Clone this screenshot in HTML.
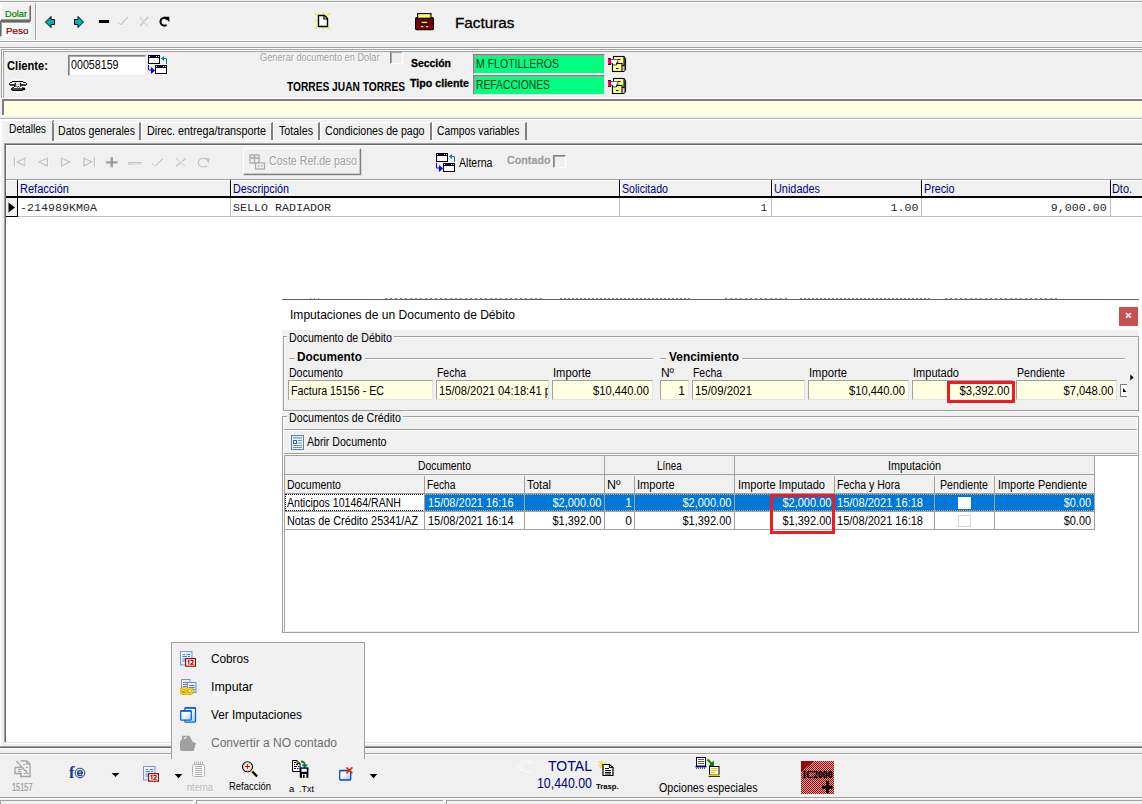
<!DOCTYPE html>
<html>
<head>
<meta charset="utf-8">
<title>Facturas</title>
<style>
html,body{margin:0;padding:0;}
body{width:1142px;height:804px;overflow:hidden;background:#f0f0f0;font-family:"Liberation Sans",sans-serif;font-size:12px;color:#000;position:relative;}
.a{position:absolute;}
.t{position:absolute;white-space:nowrap;line-height:1;}
.hl{position:absolute;height:1px;}
.vl{position:absolute;width:1px;}
.sunk{position:absolute;box-sizing:border-box;border:1px solid;border-color:#808080 #fff #fff #808080;}
.yf{position:absolute;box-sizing:border-box;background:#ffffe1;border:1px solid;border-color:#a0a0a0 #e3e3e3 #e3e3e3 #a0a0a0;}
.yf span{position:absolute;top:4px;font-size:12px;line-height:1;white-space:nowrap;}
.gh{position:absolute;color:#000080;font-size:12px;line-height:1;white-space:nowrap;top:183px;}
.mono{position:absolute;font-family:"Liberation Mono",monospace;font-size:11px;line-height:1;white-space:nowrap;top:203px;color:#2a2a2a;}
.dl{position:absolute;font-size:12px;line-height:1;white-space:nowrap;color:#000;}
.cell{position:absolute;font-size:12px;line-height:1;white-space:nowrap;}
</style>
</head>
<body>

<!-- ===== TOP TOOLBAR ===== -->
<div class="hl" style="left:0;top:1px;width:1142px;background:#a0a0a0;"></div>
<div class="hl" style="left:0;top:2px;width:1142px;background:#fff;"></div>
<div class="vl" style="left:35px;top:3px;height:37px;background:#a0a0a0;"></div>
<div class="vl" style="left:36px;top:3px;height:37px;background:#fff;"></div>
<div class="hl" style="left:0;top:40px;width:1142px;background:#fff;"></div>
<div class="hl" style="left:0;top:41px;width:1142px;background:#a0a0a0;"></div>
<div class="hl" style="left:0;top:42px;width:1142px;background:#fff;"></div>
<div class="hl" style="left:0;top:47px;width:1142px;background:#a0a0a0;"></div>
<div class="hl" style="left:0;top:48px;width:1142px;background:#fff;"></div>

<!-- Dolar / Peso buttons -->
<div class="a" style="left:0;top:5px;width:31px;height:16px;box-sizing:border-box;border:1px solid;border-color:#fff #696969 #696969 #fff;box-shadow:inset -1px -1px 0 #a0a0a0;"></div>
<div class="t" style="left:5px;top:9px;font-size:9.5px;color:#008000;-webkit-text-stroke:0.2px #008000;transform:scaleX(0.9690);transform-origin:0 0;">Dolar</div>
<div class="a" style="left:0;top:21px;width:31px;height:16px;box-sizing:border-box;border:1px solid;border-color:#696969 #fff #fff #696969;box-shadow:inset 1px 1px 0 #a0a0a0;background:#f8f8f8;"></div>
<div class="t" style="left:5.7px;top:26.3px;font-size:9.5px;color:#800000;-webkit-text-stroke:0.2px #800000;transform:scaleX(1.0390);transform-origin:0 0;">Peso</div>

<!-- nav icons top -->
<svg class="a" style="left:44px;top:14px;" width="130" height="16" viewBox="0 0 130 16">
  <path d="M1.5 8 L7 2.5 V5.5 H10.5 V10.5 H7 V13.5 Z" fill="#00b4b4" stroke="#000" stroke-width="1"/>
  <path d="M39.5 8 L34 2.5 V5.5 H30.5 V10.5 H34 V13.5 Z" fill="#00b4b4" stroke="#000" stroke-width="1"/>
  <rect x="55" y="6" width="10" height="3" fill="#000"/>
  <path d="M74 9 L77 11 L84 3" fill="none" stroke="#c4c4c4" stroke-width="1.3"/>
  <path d="M74.5 10 L77.5 12 L84.5 4" fill="none" stroke="#fff" stroke-width="1"/>
  <path d="M96 3 L104 12 M104 3 L96 12" fill="none" stroke="#c4c4c4" stroke-width="1.3"/>
  <path d="M97 3.5 L105 12.5" fill="none" stroke="#fff" stroke-width="0.8"/>
  <path d="M123.6 5.6 A3.9 3.9 0 1 0 122.6 10.9" fill="none" stroke="#000" stroke-width="2"/>
  <path d="M120.2 2.7 H125.3 V8 Z" fill="#000"/>
</svg>

<!-- new doc icon -->
<svg class="a" style="left:313px;top:11px;" width="20" height="20" viewBox="0 0 20 20">
  <path d="M2 2 L6 6 M17 2 L13 6 M2 18 L6 14 M17 18 L13 14 M1 10 H5 M10 1 V4 M10 19 V16" stroke="#f4f000" stroke-width="1.2"/>
  <path d="M5.5 4.5 H11.5 L14.5 7.5 V15.5 H5.5 Z" fill="#fff" stroke="#000" stroke-width="1.4"/>
  <path d="M11 4.5 V8 H14.5" fill="none" stroke="#000" stroke-width="1.2"/>
</svg>

<!-- Facturas icon -->
<svg class="a" style="left:415px;top:12px;" width="19" height="19" viewBox="0 0 19 19">
  <rect x="0.6" y="5.6" width="17.8" height="12" rx="1.2" fill="#800000" stroke="#000" stroke-width="1.2"/>
  <rect x="2.6" y="1.6" width="13.4" height="5" fill="#ffff00" stroke="#000" stroke-width="1.1"/>
  <path d="M3.5 2.8 H15 " stroke="#d0d0d0" stroke-width="1"/><path d="M4 4.6 L14 3.6" stroke="#fff" stroke-width="0.8"/>
  <path d="M1.5 6.3 H17.5" stroke="#000" stroke-width="1.2"/>
  <rect x="5.6" y="8.6" width="7.6" height="3.6" fill="#800000" stroke="#000" stroke-width="0.9"/>
  <path d="M6.6 10.4 H12.2" stroke="#ffff00" stroke-width="1.2"/>
  <path d="M6 14.6 H8.2 M11 14.6 H13.2" stroke="#ffff00" stroke-width="1.2"/>
</svg>
<div class="t" style="left:455px;top:16px;font-size:14px;-webkit-text-stroke:0.3px #000;transform:scaleX(1.0924);transform-origin:0 0;">Facturas</div>

<!-- Client panel content -->
<div class="t" style="left:7px;top:60px;font-size:12px;font-weight:bold;transform:scaleX(0.9315);transform-origin:0 0;">Cliente:</div>
<div class="a" style="left:68px;top:55px;width:78px;height:21px;box-sizing:border-box;background:#fff;border:1px solid;border-color:#808080 #e8e8e8 #e8e8e8 #808080;box-shadow:inset 1px 1px 0 #a8a8a8;"></div>
<div class="t" style="left:71px;top:59px;font-size:12px;transform:scaleX(0.8897);transform-origin:0 0;">00058159</div>

<svg class="a" id="swap1" style="left:148px;top:55px;" width="20" height="20" viewBox="0 0 20 20">
  <rect x="0" y="0" width="12" height="9" fill="#000"/><rect x="1" y="3" width="10" height="5" fill="#fff"/>
  <rect x="1" y="1" width="1" height="1" fill="#fff"/><rect x="8" y="1" width="1" height="1" fill="#fff"/><rect x="10" y="1" width="1" height="1" fill="#fff"/><rect x="3" y="1" width="4" height="1" fill="#0000a0"/>
  <rect x="7" y="10" width="12" height="9" fill="#000"/><rect x="8" y="13" width="10" height="5" fill="#fff"/>
  <rect x="8" y="11" width="1" height="1" fill="#fff"/><rect x="15" y="11" width="1" height="1" fill="#fff"/><rect x="17" y="11" width="1" height="1" fill="#fff"/><rect x="10" y="11" width="4" height="1" fill="#0000a0"/>
  <path d="M13 3.5 L16 1 V3 H18 Q19 3 19 4 V9 H18 V4 H16 V6 Z" fill="#008080"/>
  <path d="M0 10 H1 V14.5 H3 V12 L7 15.5 L3 19 V15.5 H1 Q0 15.5 0 14.5 Z" fill="#0000ff"/>
</svg>

<!-- phone -->
<svg class="a" style="left:8px;top:79px;" width="21" height="14" viewBox="-1 -1 21 14">
  <path d="M3 0.5 H14.5 L17.5 2 L18.5 4 L17 6 H12 L14.5 7.5 L16.5 8 V10.5 L14 11.5 H3 L1.5 10 V8 L5.5 7 V6 H1.5 L0 4 L1 2 Z" fill="#fff" stroke="#fff" stroke-width="2" stroke-linejoin="round"/>
  <path d="M3 1.5 H14.2" stroke="#000" stroke-width="1.1"/>
  <path d="M1.2 2.5 H3 M14.2 2.5 H16.8" stroke="#000" stroke-width="1"/>
  <path d="M0.6 3.2 V5 M17.6 3.2 V5" stroke="#000" stroke-width="1.2"/>
  <path d="M1 5 H6.3 M11.2 5 H17.2" stroke="#000" stroke-width="1.7"/>
  <path d="M6.3 2.8 V5.4 M11.4 2.8 V5.4" stroke="#000" stroke-width="1.1"/>
  <path d="M7 4.3 H11" stroke="#909090" stroke-width="0.6"/>
  <path d="M5.6 5.6 V7 M11.2 6.4 H12.2" stroke="#000" stroke-width="1.1"/>
  <rect x="6.4" y="6" width="1.3" height="1" fill="#000"/><rect x="8.6" y="6" width="1.3" height="1" fill="#000"/>
  <path d="M3.5 7 H4.8 V8 H8 L8.4 7 L9 8 H9.8 L10.4 7 L10.9 8 H12.8 L13.2 7 L14 7.6 L16.2 8 V10 L14 10.2 V11 H3.2 V10.2 L2 10 V8.4 L3 8 Z" fill="#000"/>
  <path d="M3.4 9 H13.6" stroke="#a0a0a0" stroke-width="0.9"/>
  <rect x="14.2" y="7.2" width="1.6" height="0.8" fill="#707070"/>
</svg>

<div class="t" style="left:260px;top:52px;font-size:10.5px;color:#a0a0a0;text-shadow:1px 1px 0 #fff;transform:scaleX(0.8787);transform-origin:0 0;">Generar documento en Dolar</div>
<div class="a" style="left:390px;top:51px;width:13px;height:13px;box-sizing:border-box;background:#f0f0f0;border:1px solid;border-color:#808080 #fff #fff #808080;box-shadow:inset 1px 1px 0 #a8a8a8;"></div>

<div class="t" style="left:287px;top:81px;font-size:12px;font-weight:bold;transform:scaleX(0.8494);transform-origin:0 0;">TORRES JUAN TORRES</div>
<div class="t" style="left:411px;top:58px;font-size:11px;font-weight:bold;-webkit-text-stroke:0.3px #000;transform:scaleX(0.9481);transform-origin:0 0;">Sección</div>
<div class="t" style="left:410px;top:78px;font-size:11px;font-weight:bold;-webkit-text-stroke:0.3px #000;transform:scaleX(0.9685);transform-origin:0 0;">Tipo cliente</div>

<div class="a" style="left:473px;top:54px;width:132px;height:20px;box-sizing:border-box;background:#00ff80;border:1px solid;border-color:#808080 #e8e8e8 #e8e8e8 #808080;box-shadow:inset 1px 1px 0 #a0a0a0;"></div>
<div class="t" style="left:476px;top:58px;font-size:12px;color:#003018;transform:scaleX(0.8766);transform-origin:0 0;">M FLOTILLEROS</div>
<div class="a" style="left:473px;top:75px;width:132px;height:20px;box-sizing:border-box;background:#00ff80;border:1px solid;border-color:#808080 #e8e8e8 #e8e8e8 #808080;box-shadow:inset 1px 1px 0 #a0a0a0;"></div>
<div class="t" style="left:476px;top:79px;font-size:12px;color:#003018;transform:scaleX(0.8603);transform-origin:0 0;">REFACCIONES</div>

<svg class="a" style="left:608px;top:55px;" width="19" height="18" viewBox="0 0 19 18">
  <path d="M16 1.5 L17.6 3.5 V15 L16 16.5 H13 V1.5 Z" fill="#fff" stroke="#000" stroke-width="1"/>
  <path d="M16.2 3 V15.5" stroke="#000" stroke-width="0.8"/>
  <rect x="5.5" y="1.5" width="10.5" height="9" fill="#ffff88" stroke="#000" stroke-width="1.1"/>
  <rect x="4.5" y="8.5" width="9.5" height="8" fill="#ffff88" stroke="#000" stroke-width="1.1"/>
  <path d="M10 4.5 H12.5 M8 13.5 H10.5" stroke="#000" stroke-width="1.1"/>
  <path d="M3 4.5 H9.5 L10 7.5 H8.5 L8.5 10 H5.5 L4.5 8.5 L3 8 Z" fill="#fff" stroke="#000" stroke-width="0.7"/>
  <rect x="3" y="4.8" width="6" height="2.6" fill="#fff"/>
  <rect x="0" y="3.2" width="3" height="6.6" fill="#ff00d0"/><rect x="1" y="4" width="2" height="5" fill="#f00020"/>
  <path d="M0 3.7 H3 M0 9.5 H3" stroke="#000" stroke-width="1"/>
</svg>
<svg class="a" style="left:608px;top:77px;" width="19" height="18" viewBox="0 0 19 18">
  <path d="M16 1.5 L17.6 3.5 V15 L16 16.5 H13 V1.5 Z" fill="#fff" stroke="#000" stroke-width="1"/>
  <path d="M16.2 3 V15.5" stroke="#000" stroke-width="0.8"/>
  <rect x="5.5" y="1.5" width="10.5" height="9" fill="#ffff88" stroke="#000" stroke-width="1.1"/>
  <rect x="4.5" y="8.5" width="9.5" height="8" fill="#ffff88" stroke="#000" stroke-width="1.1"/>
  <path d="M10 4.5 H12.5 M8 13.5 H10.5" stroke="#000" stroke-width="1.1"/>
  <path d="M3 4.5 H9.5 L10 7.5 H8.5 L8.5 10 H5.5 L4.5 8.5 L3 8 Z" fill="#fff" stroke="#000" stroke-width="0.7"/>
  <rect x="3" y="4.8" width="6" height="2.6" fill="#fff"/>
  <rect x="0" y="3.2" width="3" height="6.6" fill="#ff00d0"/><rect x="1" y="4" width="2" height="5" fill="#f00020"/>
  <path d="M0 3.7 H3 M0 9.5 H3" stroke="#000" stroke-width="1"/>
</svg>

<!-- ===== CLIENT PANEL ===== -->
<div class="a" style="left:1px;top:49px;width:1141px;height:49px;box-sizing:border-box;border-left:1px solid #a0a0a0;border-top:1px solid #a0a0a0;"></div>
<div class="a" style="left:2px;top:50px;width:1140px;height:48px;box-sizing:border-box;border-left:1px solid #fff;border-top:1px solid #fff;"></div>
<div class="a" style="left:3px;top:51px;width:1139px;height:47px;box-sizing:border-box;border-left:1px solid #a0a0a0;border-top:1px solid #a0a0a0;"></div>

<!-- yellow bar -->
<div class="hl" style="left:1px;top:98px;width:1141px;background:#fff;"></div>
<div class="a" style="left:2px;top:99px;width:1140px;height:16px;box-sizing:border-box;background:#ffffe1;border-top:2px solid #808080;border-left:2px solid #808080;"></div>
<div class="hl" style="left:2px;top:115px;width:1140px;background:#fff;"></div>
<div class="hl" style="left:0;top:118px;width:1142px;background:#b4b4b4;"></div>
<div class="hl" style="left:0;top:119px;width:1142px;background:#fff;"></div>

<!-- ===== TAB PANEL ===== -->
<!-- tabs -->
<div class="a" style="left:1px;top:120px;width:53px;height:21px;box-sizing:border-box;border-top:1px solid #fff;border-left:1px solid #fff;border-right:2px solid #808080;background:#f0f0f0;"></div>
<div class="t" style="left:9px;top:123px;font-size:12px;transform:scaleX(0.8533);transform-origin:0 0;">Detalles</div>
<div class="a" style="left:53px;top:122px;width:88px;height:18px;box-sizing:border-box;border-top:1px solid #fff;border-right:2px solid #808080;"></div>
<div class="t" style="left:58px;top:125px;font-size:12px;transform:scaleX(0.8811);transform-origin:0 0;">Datos generales</div>
<div class="a" style="left:141px;top:122px;width:132px;height:18px;box-sizing:border-box;border-top:1px solid #fff;border-left:1px solid #fff;border-right:2px solid #808080;"></div>
<div class="t" style="left:147px;top:125px;font-size:12px;transform:scaleX(0.8965);transform-origin:0 0;">Direc. entrega/transporte</div>
<div class="a" style="left:273px;top:122px;width:47px;height:18px;box-sizing:border-box;border-top:1px solid #fff;border-left:1px solid #fff;border-right:2px solid #808080;"></div>
<div class="t" style="left:279px;top:125px;font-size:12px;transform:scaleX(0.8940);transform-origin:0 0;">Totales</div>
<div class="a" style="left:320px;top:122px;width:112px;height:18px;box-sizing:border-box;border-top:1px solid #fff;border-left:1px solid #fff;border-right:2px solid #808080;"></div>
<div class="t" style="left:325px;top:125px;font-size:12px;transform:scaleX(0.8824);transform-origin:0 0;">Condiciones de pago</div>
<div class="a" style="left:432px;top:122px;width:95px;height:18px;box-sizing:border-box;border-top:1px solid #fff;border-left:1px solid #fff;border-right:2px solid #808080;"></div>
<div class="t" style="left:437px;top:125px;font-size:12px;transform:scaleX(0.8590);transform-origin:0 0;">Campos variables</div>

<div class="hl" style="left:54px;top:140px;width:1088px;background:#fff;"></div>
<div class="hl" style="left:4px;top:143px;width:1138px;background:#a0a0a0;"></div>
<div class="hl" style="left:5px;top:144px;width:1137px;background:#696969;"></div>
<div class="hl" style="left:6px;top:145px;width:1136px;background:#fff;"></div>
<div class="vl" style="left:4px;top:143px;height:599px;background:#a0a0a0;"></div>
<div class="vl" style="left:5px;top:144px;height:598px;background:#696969;"></div>
<div class="vl" style="left:6px;top:145px;height:597px;background:#fff;"></div>
<div class="vl" style="left:0px;top:120px;height:626px;background:#fff;"></div>

<!-- grid area white -->
<div class="a" style="left:6px;top:198px;width:1136px;height:544px;background:#fff;"></div>


<!-- inner nav icons (disabled) -->
<svg class="a" style="left:12px;top:155px;" width="202" height="15" viewBox="0 0 202 15">
<g transform="translate(0,0.9) scale(1,0.88)">
  <g fill="none" stroke="#c0c0c0" stroke-width="1.2">
    <path d="M2.5 2 V12"/><path d="M13 2.5 L5 7 L13 11.5 Z"/>
    <path d="M35.5 2.5 L27 7 L35.5 11.5 Z"/>
    <path d="M49.5 2.5 L58 7 L49.5 11.5 Z"/>
    <path d="M72 2.5 L80 7 L72 11.5 Z"/><path d="M82.5 2 V12"/>
    <path d="M117 7.5 H129 V9.5 H117 Z"/>
    <path d="M140 9 L143.5 11.5 L151 3.5"/>
    <path d="M164 2.5 L174 12 M174 2.5 L164 12"/>
    <path d="M196 6 A5 5 0 1 0 195 11"/><path d="M192 3 L197 3.5 L196 8"/>
  </g>
  <path d="M94 6 H98.5 V1.5 H101 V6 H105.5 V8.5 H101 V13 H98.5 V8.5 H94 Z" fill="#9c9c9c"/>
  <g fill="none" stroke="#fff" stroke-width="0.8">
    <path d="M3.5 3 V13"/><path d="M14 3.5 V12.5"/><path d="M36.5 3.5 V12.5"/><path d="M50.5 12.5 L59 8"/><path d="M73 12.5 L81 8"/><path d="M83.5 3 V13"/>
    <path d="M118 10.5 H130 V8.5"/><path d="M141 10 L144.5 12.5 L152 4.5"/><path d="M165 3 L175 12.5"/>
  </g>
</g>
</svg>

<!-- Coste button -->
<div class="a" style="left:243px;top:148px;width:118px;height:27px;box-sizing:border-box;border:1px solid;border-color:#fff #808080 #808080 #fff;box-shadow:inset -1px -1px 0 #c8c8c8, 1px 1px 0 #d8d8d8;"></div>
<svg class="a" style="left:249px;top:154px;" width="17" height="16" viewBox="0 0 17 16">
  <g fill="none" stroke="#a8a8a8" stroke-width="1.3"><rect x="1" y="1" width="9" height="8"/><path d="M1 4 H10 M5.5 1 V9"/><rect x="6.5" y="9" width="9" height="6" fill="#f0f0f0"/><path d="M9 12 H10.5 M12 12 H13.5"/></g>
</svg>
<div class="t" style="left:269px;top:155px;font-size:12px;color:#a0a0a0;text-shadow:1px 1px 0 #fff;transform:scaleX(0.8853);transform-origin:0 0;">Coste Ref.de paso</div>

<!-- Alterna -->
<svg class="a" style="left:436px;top:153px;" width="20" height="20" viewBox="0 0 20 20">
  <rect x="0" y="0" width="12" height="9" fill="#000"/><rect x="1" y="3" width="10" height="5" fill="#fff"/>
  <rect x="1" y="1" width="1" height="1" fill="#fff"/><rect x="8" y="1" width="1" height="1" fill="#fff"/><rect x="10" y="1" width="1" height="1" fill="#fff"/><rect x="3" y="1" width="4" height="1" fill="#0000a0"/>
  <rect x="7" y="10" width="12" height="9" fill="#000"/><rect x="8" y="13" width="10" height="5" fill="#fff"/>
  <rect x="8" y="11" width="1" height="1" fill="#fff"/><rect x="15" y="11" width="1" height="1" fill="#fff"/><rect x="17" y="11" width="1" height="1" fill="#fff"/><rect x="10" y="11" width="4" height="1" fill="#0000a0"/>
  <path d="M13 3.5 L16 1 V3 H18 Q19 3 19 4 V9 H18 V4 H16 V6 Z" fill="#008080"/>
  <path d="M0 10 H1 V14.5 H3 V12 L7 15.5 L3 19 V15.5 H1 Q0 15.5 0 14.5 Z" fill="#0000ff"/>
</svg>
<div class="t" style="left:459px;top:157px;font-size:12px;transform:scaleX(0.8809);transform-origin:0 0;">Alterna</div>
<div class="t" style="left:507px;top:155px;font-size:11px;font-weight:bold;color:#a0a0a0;text-shadow:1px 1px 0 #fff;-webkit-text-stroke:0.3px #a0a0a0;transform:scaleX(0.9751);transform-origin:0 0;">Contado</div>
<div class="a" style="left:553px;top:155px;width:13px;height:13px;box-sizing:border-box;background:#f0f0f0;border:1px solid;border-color:#808080 #fff #fff #808080;box-shadow:inset 1px 1px 0 #a8a8a8;"></div>

<!-- grid header -->
<div class="hl" style="left:6px;top:179px;width:1136px;background:#a0a0a0;"></div>
<div class="hl" style="left:6px;top:180px;width:1136px;background:#fff;"></div>
<div class="a" style="left:6px;top:196px;width:1136px;height:2px;background:#000;"></div>
<div class="vl" style="left:17px;top:180px;height:36px;background:#000;"></div>
<div class="vl" style="left:230px;top:180px;height:17px;background:#000;"></div>
<div class="vl" style="left:619px;top:180px;height:17px;background:#000;"></div>
<div class="vl" style="left:771px;top:180px;height:17px;background:#000;"></div>
<div class="vl" style="left:921px;top:180px;height:17px;background:#000;"></div>
<div class="vl" style="left:1110px;top:180px;height:17px;background:#000;"></div>
<div class="vl" style="left:231px;top:180px;height:16px;background:#fff;"></div>
<div class="vl" style="left:620px;top:180px;height:16px;background:#fff;"></div>
<div class="vl" style="left:772px;top:180px;height:16px;background:#fff;"></div>
<div class="vl" style="left:922px;top:180px;height:16px;background:#fff;"></div>
<div class="vl" style="left:1111px;top:180px;height:16px;background:#fff;"></div>
<div class="vl" style="left:18px;top:180px;height:16px;background:#fff;"></div>
<div class="gh" style="left:20px;transform:scaleX(0.9180);transform-origin:0 0;">Refacción</div>
<div class="gh" style="left:233px;transform:scaleX(0.8931);transform-origin:0 0;">Descripción</div>
<div class="gh" style="left:622px;transform:scaleX(0.8841);transform-origin:0 0;">Solicitado</div>
<div class="gh" style="left:774px;transform:scaleX(0.9072);transform-origin:0 0;">Unidades</div>
<div class="gh" style="left:924px;transform:scaleX(0.8966);transform-origin:0 0;">Precio</div>
<div class="gh" style="left:1112px;transform:scaleX(0.9084);transform-origin:0 0;">Dto.</div>

<!-- grid row -->
<div class="a" style="left:6px;top:198px;width:11px;height:18px;background:#f0f0f0;"></div>
<div class="hl" style="left:6px;top:216px;width:12px;background:#000;"></div>
<div class="hl" style="left:18px;top:216px;width:1124px;background:#c0c0c0;"></div>
<div class="vl" style="left:230px;top:198px;height:18px;background:#c0c0c0;"></div>
<div class="vl" style="left:619px;top:198px;height:18px;background:#c0c0c0;"></div>
<div class="vl" style="left:771px;top:198px;height:18px;background:#c0c0c0;"></div>
<div class="vl" style="left:921px;top:198px;height:18px;background:#c0c0c0;"></div>
<div class="vl" style="left:1110px;top:198px;height:18px;background:#c0c0c0;"></div>
<svg class="a" style="left:8px;top:202px;" width="8" height="11" viewBox="0 0 8 11"><path d="M0.5 0.5 L7 5.5 L0.5 10.5 Z" fill="#000"/></svg>
<div class="mono" style="left:20px;transform:scaleX(1.0602);transform-origin:0 0;">-214989KM0A</div>
<div class="mono" style="left:233px;transform:scaleX(1.0604);transform-origin:0 0;">SELLO RADIADOR</div>
<div class="mono" style="right:375px;">1</div>
<div class="mono" style="right:224px;transform:scaleX(1.0604);transform-origin:100% 0;">1.00</div>
<div class="mono" style="right:35px;transform:scaleX(1.0604);transform-origin:100% 0;">9,000.00</div>


<!-- ===== DIALOG ===== -->
<div class="a" style="left:310px;top:298px;width:12px;height:1px;background:repeating-linear-gradient(90deg,#9a9a9a 0 1px,transparent 1px 4px);"></div>
<div class="a" style="left:385px;top:298px;width:160px;height:1px;background:repeating-linear-gradient(90deg,#8a8a8a 0 2px,transparent 2px 5px);"></div>
<div class="a" style="left:560px;top:298px;width:130px;height:1px;background:repeating-linear-gradient(90deg,#8a8a8a 0 2px,transparent 2px 4px);"></div>
<div class="a" style="left:725px;top:298px;width:65px;height:1px;background:repeating-linear-gradient(90deg,#8a8a8a 0 2px,transparent 2px 5px);"></div>
<div class="a" style="left:800px;top:298px;width:130px;height:1px;background:repeating-linear-gradient(90deg,#8a8a8a 0 2px,transparent 2px 4px);"></div>
<div class="a" style="left:945px;top:298px;width:115px;height:1px;background:repeating-linear-gradient(90deg,#8a8a8a 0 2px,transparent 2px 5px);"></div>

<div class="a" style="left:282px;top:299px;width:857px;height:1px;background:#606060;"></div>
<div class="a" style="left:282px;top:300px;width:857px;height:30px;background:#fff;"></div>
<div class="a" style="left:282px;top:330px;width:857px;height:302px;background:#f0f0f0;"></div>
<div class="t" style="left:290px;top:308px;font-size:13px;color:#000;transform:scaleX(0.9266);transform-origin:0 0;">Imputaciones de un Documento de Débito</div>
<div class="a" style="left:1119px;top:307px;width:19px;height:19px;background:#c75050;"></div>
<svg class="a" style="left:1124px;top:311px;" width="9" height="9" viewBox="0 0 9 9"><path d="M2 2 L6.8 6.6 M6.8 2 L2 6.6" stroke="#fff" stroke-width="1.7" fill="none"/></svg>

<!-- group 1 -->
<div class="a" style="left:283px;top:336px;width:856px;height:75px;box-sizing:border-box;border:1px solid #a0a0a0;box-shadow:inset 1px 1px 0 #fff, 1px 1px 0 #fff;"></div>
<div class="a" style="left:287px;top:331px;width:107px;height:12px;background:#f0f0f0;"></div>
<div class="dl" style="left:289px;top:332px;transform:scaleX(0.8873);transform-origin:0 0;">Documento de Débito</div>

<div class="hl" style="left:289px;top:358px;width:6px;background:#a0a0a0;"></div>
<div class="hl" style="left:289px;top:359px;width:6px;background:#fff;"></div>
<div class="t" style="left:297px;top:351px;font-size:12px;font-weight:bold;transform:scaleX(0.9848);transform-origin:0 0;">Documento</div>
<div class="hl" style="left:365px;top:358px;width:288px;background:#a0a0a0;"></div>
<div class="hl" style="left:365px;top:359px;width:288px;background:#fff;"></div>
<div class="hl" style="left:660px;top:358px;width:6px;background:#a0a0a0;"></div>
<div class="hl" style="left:660px;top:359px;width:6px;background:#fff;"></div>
<div class="t" style="left:669px;top:351px;font-size:12px;font-weight:bold;transform:scaleX(0.9903);transform-origin:0 0;">Vencimiento</div>
<div class="hl" style="left:742px;top:358px;width:383px;background:#a0a0a0;"></div>
<div class="hl" style="left:742px;top:359px;width:383px;background:#fff;"></div>

<div class="dl" style="left:289px;top:367px;transform:scaleX(0.8798);transform-origin:0 0;">Documento</div>
<div class="dl" style="left:437px;top:367px;transform:scaleX(0.8693);transform-origin:0 0;">Fecha</div>
<div class="dl" style="left:553px;top:367px;transform:scaleX(0.9339);transform-origin:0 0;">Importe</div>
<div class="dl" style="left:661px;top:367px;transform:scaleX(0.9952);transform-origin:0 0;">Nº</div>
<div class="dl" style="left:693px;top:367px;transform:scaleX(0.8693);transform-origin:0 0;">Fecha</div>
<div class="dl" style="left:809px;top:367px;transform:scaleX(0.9339);transform-origin:0 0;">Importe</div>
<div class="dl" style="left:913px;top:367px;transform:scaleX(0.9191);transform-origin:0 0;">Imputado</div>
<div class="dl" style="left:1017px;top:367px;transform:scaleX(0.8881);transform-origin:0 0;">Pendiente</div>

<div class="yf" style="left:288px;top:380px;width:145px;height:20px;"><span style="left:2px;transform:scaleX(0.8881);transform-origin:0 0;">Factura 15156 - EC</span></div>
<div class="yf" style="left:436px;top:380px;width:113px;height:20px;overflow:hidden;"><span style="left:2px;transform:scaleX(0.9324);transform-origin:0 0;">15/08/2021 04:18:41 p</span></div>
<div class="yf" style="left:552px;top:380px;width:101px;height:20px;"><span style="right:3px;transform:scaleX(0.9324);transform-origin:100% 0;">$10,440.00</span></div>
<div class="yf" style="left:660px;top:380px;width:29px;height:20px;"><span style="right:3px;">1</span></div>
<div class="yf" style="left:692px;top:380px;width:113px;height:20px;"><span style="left:2px;transform:scaleX(0.9490);transform-origin:0 0;">15/09/2021</span></div>
<div class="yf" style="left:808px;top:380px;width:101px;height:20px;"><span style="right:3px;transform:scaleX(0.9324);transform-origin:100% 0;">$10,440.00</span></div>
<div class="yf" style="left:912px;top:380px;width:101px;height:20px;"><span style="right:3px;transform:scaleX(0.9365);transform-origin:100% 0;">$3,392.00</span></div>
<div class="yf" style="left:1016px;top:380px;width:101px;height:20px;"><span style="right:3px;transform:scaleX(0.9365);transform-origin:100% 0;">$7,048.00</span></div>
<div class="a" style="left:947px;top:381px;width:68px;height:22px;box-sizing:border-box;border:3px solid #ed1c24;"></div>
<svg class="a" style="left:1130px;top:374px;" width="5" height="7" viewBox="0 0 5 7"><path d="M0.3 0.5 L3.6 3.5 L0.3 6.5 Z" fill="#000"/></svg>
<div class="a" style="left:1120px;top:384px;width:7px;height:13px;box-sizing:border-box;background:#fff;border:1px solid #808080;border-right:none;"></div>
<svg class="a" style="left:1123px;top:388px;" width="4" height="5" viewBox="0 0 4 5"><path d="M0 0 L3.5 4 H0 Z" fill="#000"/></svg>


<!-- group 2 -->
<div class="a" style="left:282px;top:416px;width:857px;height:217px;box-sizing:border-box;border:1px solid #a0a0a0;background:#f0f0f0;"></div>
<div class="hl" style="left:283px;top:417px;width:855px;background:#fff;"></div>
<div class="vl" style="left:283px;top:417px;height:215px;background:#fff;"></div>
<div class="vl" style="left:1137px;top:417px;height:215px;background:#fff;"></div>
<div class="a" style="left:287px;top:411px;width:116px;height:12px;background:#f0f0f0;"></div>
<div class="dl" style="left:289px;top:412px;transform:scaleX(0.8883);transform-origin:0 0;">Documentos de Crédito</div>
<div class="hl" style="left:284px;top:429px;width:853px;background:#a0a0a0;"></div>
<div class="hl" style="left:284px;top:430px;width:853px;background:#fff;"></div>
<div class="hl" style="left:284px;top:453px;width:853px;background:#a0a0a0;"></div>
<div class="hl" style="left:284px;top:454px;width:853px;background:#fff;"></div>
<svg class="a" style="left:291px;top:435px;" width="13" height="15" viewBox="0 0 13 15">
  <rect x="0.5" y="0.5" width="12" height="14" fill="#eaf2fb" stroke="#5b7fae"/>
  <rect x="2" y="2" width="9" height="1.5" fill="#7ea6d8"/>
  <rect x="2" y="5" width="4" height="4" fill="#2a5db0"/><rect x="3" y="6" width="2" height="2" fill="#fff"/>
  <path d="M7 5.5 H11 M7 8 H11 M2 10.5 H11 M2 12.5 H11" stroke="#6a8fc4" stroke-width="1"/>
</svg>
<div class="dl" style="left:306.5px;top:436px;transform:scaleX(0.8829);transform-origin:0 0;">Abrir Documento</div>

<!-- credit grid -->
<div class="a" style="left:284px;top:455px;width:854px;height:176px;box-sizing:border-box;background:#fff;border:1px solid #a0a0a0;border-bottom:none;border-right:none;"></div>
<div class="a" style="left:285px;top:456px;width:810px;height:37px;background:#f0f0f0;"></div>
<div class="hl" style="left:285px;top:474px;width:810px;background:#a0a0a0;"></div>
<div class="hl" style="left:285px;top:493px;width:810px;background:#a0a0a0;"></div>
<div class="hl" style="left:285px;top:511px;width:810px;background:#a0a0a0;"></div>
<div class="hl" style="left:285px;top:529px;width:810px;background:#a0a0a0;"></div>
<!-- selected row -->
<div class="a" style="left:425px;top:494px;width:669px;height:17px;background:#0078d7;"></div>
<div class="a" style="left:285px;top:494px;width:140px;height:17px;box-sizing:border-box;border:1px dotted #000;"></div>
<div class="a" style="left:425px;top:494px;width:669px;height:17px;box-sizing:border-box;border-top:1px dotted #e0a060;border-bottom:1px dotted #e0a060;"></div>
<!-- group dividers (header band 1) -->
<div class="vl" style="left:604px;top:456px;height:73px;background:#a0a0a0;"></div>
<div class="vl" style="left:734px;top:456px;height:73px;background:#a0a0a0;"></div>
<div class="vl" style="left:1094px;top:456px;height:74px;background:#a0a0a0;"></div>
<!-- col dividers -->
<div class="vl" style="left:424px;top:476px;height:53px;background:#a0a0a0;"></div>
<div class="vl" style="left:524px;top:476px;height:53px;background:#a0a0a0;"></div>
<div class="vl" style="left:634px;top:476px;height:53px;background:#a0a0a0;"></div>
<div class="vl" style="left:834px;top:476px;height:53px;background:#a0a0a0;"></div>
<div class="vl" style="left:934px;top:476px;height:53px;background:#a0a0a0;"></div>
<div class="vl" style="left:994px;top:476px;height:53px;background:#a0a0a0;"></div>

<div class="cell" style="left:418px;top:460px;transform:scaleX(0.8635);transform-origin:0 0;">Documento</div>
<div class="cell" style="left:656.5px;top:460px;transform:scaleX(0.8191);transform-origin:0 0;">Línea</div>
<div class="cell" style="left:887.7px;top:460px;transform:scaleX(0.9028);transform-origin:0 0;">Imputación</div>
<div class="cell" style="left:287px;top:479px;transform:scaleX(0.8798);transform-origin:0 0;">Documento</div>
<div class="cell" style="left:427.3px;top:479px;transform:scaleX(0.8543);transform-origin:0 0;">Fecha</div>
<div class="cell" style="left:527.3px;top:479px;transform:scaleX(0.9464);transform-origin:0 0;">Total</div>
<div class="cell" style="left:607px;top:479px;transform:scaleX(1.0335);transform-origin:0 0;">Nº</div>
<div class="cell" style="left:637px;top:479px;transform:scaleX(0.9241);transform-origin:0 0;">Importe</div>
<div class="cell" style="left:737.5px;top:479px;transform:scaleX(0.9249);transform-origin:0 0;">Importe Imputado</div>
<div class="cell" style="left:837.4px;top:479px;transform:scaleX(0.8746);transform-origin:0 0;">Fecha y Hora</div>
<div class="cell" style="left:940px;top:479px;transform:scaleX(0.8881);transform-origin:0 0;">Pendiente</div>
<div class="cell" style="left:997.5px;top:479px;transform:scaleX(0.9076);transform-origin:0 0;">Importe Pendiente</div>

<div class="cell" style="left:286.5px;top:497px;transform:scaleX(0.8809);transform-origin:0 0;">Anticipos 101464/RANH</div>
<div class="cell" style="left:428px;top:497px;color:#fff;transform:scaleX(0.9152);transform-origin:0 0;">15/08/2021 16:16</div>
<div class="cell" style="right:540.5px;top:497px;color:#fff;transform:scaleX(0.9178);transform-origin:100% 0;">$2,000.00</div>
<div class="cell" style="right:510px;top:497px;color:#fff;">1</div>
<div class="cell" style="right:411px;top:497px;color:#fff;transform:scaleX(0.9178);transform-origin:100% 0;">$2,000.00</div>
<div class="cell" style="right:311px;top:497px;color:#fff;transform:scaleX(0.9178);transform-origin:100% 0;">$2,000.00</div>
<div class="cell" style="left:837.4px;top:497px;color:#fff;transform:scaleX(0.9206);transform-origin:0 0;">15/08/2021 16:18</div>
<div class="a" style="left:958px;top:497px;width:13px;height:12px;background:#fff;"></div>
<div class="cell" style="right:50.7px;top:497px;color:#fff;transform:scaleX(0.9091);transform-origin:100% 0;">$0.00</div>

<div class="cell" style="left:286.5px;top:515px;transform:scaleX(0.9008);transform-origin:0 0;">Notas de Crédito 25341/AZ</div>
<div class="cell" style="left:428px;top:515px;transform:scaleX(0.9152);transform-origin:0 0;">15/08/2021 16:14</div>
<div class="cell" style="right:540.5px;top:515px;transform:scaleX(0.9178);transform-origin:100% 0;">$1,392.00</div>
<div class="cell" style="right:510px;top:515px;">0</div>
<div class="cell" style="right:411px;top:515px;transform:scaleX(0.9178);transform-origin:100% 0;">$1,392.00</div>
<div class="cell" style="right:311px;top:515px;transform:scaleX(0.9178);transform-origin:100% 0;">$1,392.00</div>
<div class="cell" style="left:837.4px;top:515px;transform:scaleX(0.9206);transform-origin:0 0;">15/08/2021 16:18</div>
<div class="a" style="left:958px;top:515px;width:13px;height:12px;box-sizing:border-box;background:#fff;border:1px solid #d8d8d8;"></div>
<div class="cell" style="right:50.7px;top:515px;transform:scaleX(0.9091);transform-origin:100% 0;">$0.00</div>
<div class="a" style="left:770px;top:494px;width:65px;height:40px;box-sizing:border-box;border:3px solid #ed1c24;"></div>

<!-- ===== BOTTOM ===== -->
<div class="hl" style="left:4px;top:742px;width:1138px;background:#e3e3e3;"></div>
<div class="hl" style="left:4px;top:743px;width:1138px;background:#fff;"></div>
<div class="hl" style="left:0;top:746px;width:1142px;background:#a0a0a0;"></div>
<div class="hl" style="left:0;top:747px;width:1142px;background:#696969;"></div>
<div class="hl" style="left:0;top:748px;width:1142px;background:#fff;"></div>
<div class="hl" style="left:0;top:753px;width:1142px;background:#a0a0a0;"></div>
<div class="hl" style="left:0;top:754px;width:1142px;background:#fff;"></div>
<div class="hl" style="left:0;top:797px;width:1142px;background:#a0a0a0;"></div>
<div class="hl" style="left:0;top:798px;width:1142px;background:#fff;"></div>
<div class="hl" style="left:0;top:800px;width:1142px;background:#a0a0a0;"></div>


<!-- ===== POPUP MENU ===== -->
<div class="a" style="left:171px;top:642px;width:194px;height:117px;box-sizing:border-box;background:#f2f2f2;border:1px solid #a0a0a0;border-bottom:none;"></div>
<div class="a" style="left:172px;top:643px;width:35px;height:116px;background:#f0f0f0;"></div>
<div class="t" style="left:211px;top:652px;font-size:13px;color:#000;transform:scaleX(0.9064);transform-origin:0 0;">Cobros</div>
<div class="t" style="left:211px;top:680px;font-size:13px;color:#000;transform:scaleX(0.9529);transform-origin:0 0;">Imputar</div>
<div class="t" style="left:211px;top:708px;font-size:13px;color:#000;transform:scaleX(0.9059);transform-origin:0 0;">Ver Imputaciones</div>
<div class="t" style="left:211px;top:736px;font-size:13px;color:#6d6d6d;transform:scaleX(0.9225);transform-origin:0 0;">Convertir a NO contado</div>

<!-- menu icons -->
<svg class="a" id="mi1" style="left:180px;top:650px;" width="17" height="18" viewBox="0 0 17 18">
  <defs><linearGradient id="gdoc" x1="0" y1="0" x2="1" y2="1"><stop offset="0" stop-color="#fff"/><stop offset="1" stop-color="#c4daf6"/></linearGradient></defs>
  <rect x="0.5" y="1.5" width="11.5" height="13.5" fill="url(#gdoc)" stroke="#8294c8" stroke-width="1"/>
  <path d="M2.5 4.5 H5 M6.5 4.5 H10 M2.5 6.5 H7 M8 6.5 H10 M2.5 9 H5 M2.5 11 H5" stroke="#2a8ae0" stroke-width="1.1"/>
  <rect x="5.6" y="8.6" width="9.8" height="7.6" fill="#fff" stroke="#a80808" stroke-width="1.2"/>
  <path d="M7.6 11 L8.9 10.4 V14.6" fill="none" stroke="#a80808" stroke-width="1.2"/>
  <path d="M10.6 11.2 Q10.8 10.3 12 10.3 Q13.4 10.4 13.2 11.5 Q13 12.3 10.7 14.3 H13.8" fill="none" stroke="#a80808" stroke-width="1.1"/>
</svg>
<svg class="a" id="mi2" style="left:180px;top:678px;" width="17" height="18" viewBox="0 0 17 18">
  <rect x="1.5" y="1.5" width="8.5" height="12" fill="url(#gdoc)" stroke="#7c90cc" stroke-width="1"/>
  <path d="M3 4.5 H8 M3 6.5 H8 M3 8.5 H8" stroke="#7070c0" stroke-width="1"/>
  <rect x="7.5" y="4.5" width="8.5" height="10" fill="url(#gdoc)" stroke="#7c90cc" stroke-width="1"/>
  <path d="M9 7.5 H14.5 M9 9.5 H14.5 M11 11.5 H14.5" stroke="#7070c0" stroke-width="1"/>
  <rect x="0.8" y="10.8" width="6.2" height="4.6" rx="2.2" fill="none" stroke="#b88a00" stroke-width="2.6"/>
  <rect x="6.2" y="10.8" width="6.2" height="4.6" rx="2.2" fill="none" stroke="#b88a00" stroke-width="2.6"/>
  <rect x="0.8" y="10.8" width="6.2" height="4.6" rx="2.2" fill="none" stroke="#ffe000" stroke-width="1.4"/>
  <rect x="6.2" y="10.8" width="6.2" height="4.6" rx="2.2" fill="none" stroke="#ffe000" stroke-width="1.4"/>
  <path d="M4.5 13.1 H8.7" stroke="#b88a00" stroke-width="2.4"/><path d="M4.2 13.1 H9" stroke="#ffe000" stroke-width="1.2"/>
</svg>
<svg class="a" id="mi3" style="left:180px;top:706px;" width="17" height="18" viewBox="0 0 17 18">
  <defs><linearGradient id="gw" x1="0" y1="0" x2="1" y2="1"><stop offset="0" stop-color="#fff"/><stop offset="0.5" stop-color="#eef5fe"/><stop offset="1" stop-color="#9cc6f6"/></linearGradient></defs>
  <rect x="4.9" y="1.6" width="10.6" height="14.6" rx="1" fill="url(#gw)" stroke="#0a62d4" stroke-width="1.3"/>
  <rect x="4.9" y="1.2" width="10.6" height="1.6" fill="#0a62d4"/>
  <rect x="0.7" y="4.6" width="10.6" height="9.6" rx="1" fill="url(#gw)" stroke="#0a62d4" stroke-width="1.3"/>
  <rect x="0.7" y="4.2" width="10.6" height="1.6" fill="#0a62d4"/>
</svg>
<svg class="a" id="mi4" style="left:180px;top:735px;" width="17" height="17" viewBox="0 0 17 17">
  <path d="M2.1 0.8 H9.5 L12.5 6.4 L16 8.3 L14.4 13.5 L13.6 16 H1 L0 14.2 V6.8 L2.1 3.8 Z" fill="#a0a0a0"/>
  <path d="M4.2 3.6 L6.4 2.2" stroke="#f2f2f2" stroke-width="1.4"/>
</svg>

<!-- ===== BOTTOM TOOLBAR ===== -->
<svg class="a" id="bi1" style="left:14px;top:760px;" width="17" height="18" viewBox="0 0 17 18">
  <g fill="none" stroke="#a4a4a4" stroke-width="1.3">
    <path d="M6.5 1 H13 L16 4 V16.5 H6.5 V13.5"/><path d="M12.8 1.2 V4.2 H16"/>
    <path d="M2.5 1 L14 14"/>
    <path d="M1 7.5 H7.5 M1 7.5 V13.5 H8"/>
    <path d="M4 9.5 H8 M4 11.5 H7 M9 4.5 H11 M12 7.5 H14 M10 13.5 H12 M13 13.5 H14.5 M11 10.5 H13" stroke-width="1.1"/>
  </g>
</svg>
<div class="t" style="left:12px;top:783px;font-size:10px;color:#9a9a9a;-webkit-text-stroke:0.2px #9a9a9a;transform:scaleX(0.7371);transform-origin:0 0;">15157</div>

<div class="t" style="left:69px;top:765px;font-family:'Liberation Serif',serif;font-weight:bold;font-size:16.5px;color:#1c3a8c;">f</div>
<svg class="a" id="bi2" style="left:74px;top:767px;" width="12" height="12" viewBox="0 0 12 12">
  <circle cx="6" cy="6" r="4.8" fill="none" stroke="#24409a" stroke-width="1"/>
  <path d="M3.6 6.2 H8.3 Q8.3 3.6 6 3.6 Q3.6 3.6 3.6 6.2 Q3.6 8.6 6.2 8.6 Q7.6 8.6 8.3 7.7" fill="none" stroke="#24409a" stroke-width="1.4"/>
</svg>
<svg class="a" style="left:111px;top:772px;" width="9" height="6" viewBox="0 0 9 6"><path d="M0.7 0.9 H8.3 L4.5 5.1 Z" fill="#000"/></svg>

<svg class="a" id="bi3" style="left:143px;top:765px;" width="17" height="18" viewBox="0 0 17 18">
  
  <rect x="0.5" y="1.5" width="11.5" height="13.5" fill="url(#gdoc)" stroke="#8294c8" stroke-width="1"/>
  <path d="M2.5 4.5 H5 M6.5 4.5 H10 M2.5 6.5 H7 M8 6.5 H10 M2.5 9 H5 M2.5 11 H5" stroke="#2a8ae0" stroke-width="1.1"/>
  <rect x="5.6" y="8.6" width="9.8" height="7.6" fill="#fff" stroke="#a80808" stroke-width="1.2"/>
  <path d="M7.6 11 L8.9 10.4 V14.6" fill="none" stroke="#a80808" stroke-width="1.2"/>
  <path d="M10.6 11.2 Q10.8 10.3 12 10.3 Q13.4 10.4 13.2 11.5 Q13 12.3 10.7 14.3 H13.8" fill="none" stroke="#a80808" stroke-width="1.1"/>
</svg>
<svg class="a" style="left:174px;top:773px;" width="9" height="6" viewBox="0 0 9 6"><path d="M0.7 1 H8.3 L4.5 5.2 Z" fill="#000"/></svg>

<svg class="a" id="bi4" style="left:192px;top:761px;" width="13" height="16" viewBox="0 0 13 16">
  <path d="M2.5 3.5 Q0.5 3.5 0.5 5.5 V13.5 Q0.5 15.5 2.5 15.5 H10.5 Q12.5 15.5 12.5 13.5 V5.5 Q12.5 3.5 10.5 3.5 Z" fill="#fafafa" stroke="#b4b4b4" stroke-width="1"/>
  <path d="M2.5 0.5 V4 M4.5 0.5 V4 M6.5 0.5 V4 M8.5 0.5 V4 M10.5 0.5 V4" stroke="#b4b4b4" stroke-width="1"/>
  <path d="M3 5.5 H10 M3 7.5 H10 M3 9.5 H10 M3 11.5 H10 M3 13.5 H10" stroke="#b0b0b0" stroke-width="1"/>
</svg>
<div class="t" style="left:187px;top:781.5px;font-size:10.5px;color:#b4b4b4;text-shadow:1px 1px 0 #fff;transform:scaleX(0.8730);transform-origin:0 0;">nterna</div>

<svg class="a" id="bi5" style="left:242px;top:761px;" width="17" height="17" viewBox="0 0 17 17">
  <circle cx="5.5" cy="5.8" r="5" fill="#fff" stroke="#000" stroke-width="1.1"/>
  <circle cx="5.5" cy="5.8" r="3.9" fill="none" stroke="#c0c0c0" stroke-width="0.9"/>
  <path d="M3 5.5 H8 M5.5 3 V8" stroke="#ff0000" stroke-width="1.2"/>
  <path d="M9.1 9.4 L10.5 10.8" stroke="#e8d000" stroke-width="1.6"/>
  <path d="M10.3 10.6 L15.1 15.4" stroke="#000" stroke-width="2.2"/>
</svg>
<div class="t" style="left:229px;top:782px;font-size:10px;color:#000;transform:scaleX(0.9445);transform-origin:0 0;">Refacción</div>

<svg class="a" id="bi6" style="left:292px;top:760px;" width="17" height="18" viewBox="0 0 17 18">
  <path d="M0.5 0.5 H5 L8 3.5 V11.5 H0.5 Z" fill="#fff" stroke="#000"/>
  <path d="M5 0.5 V3.5 H8" fill="none" stroke="#000" stroke-width="0.9"/>
  <path d="M2 2.5 H4 M2 4.5 H3 M4 4.5 H6 M2 6.5 H5 M6 6.5 H7 M2 8.5 H4 M5 8.5 H6.5" stroke="#000" stroke-width="1"/>
  <path d="M9 1.5 Q12.8 1.5 12.6 5" fill="none" stroke="#008000" stroke-width="1.8"/><path d="M9.6 4.6 H16 L12.8 8.2 Z" fill="#008000"/>
  <rect x="7.8" y="7.8" width="8.6" height="10" fill="#000"/>
  <rect x="7.8" y="7.4" width="8.6" height="1" fill="#0000e0"/>
  <rect x="9.4" y="8.8" width="5.4" height="3" fill="#fff"/>
  <rect x="10" y="14" width="4.4" height="3.8" fill="#fff"/><rect x="11" y="14.6" width="1.6" height="3.2" fill="#000"/>
</svg>
<div class="t" style="left:289px;top:784px;font-size:9.5px;color:#000;">a</div>
<div class="t" style="left:299px;top:784px;font-size:9.5px;color:#000;transform:scaleX(0.9467);transform-origin:0 0;">.Txt</div>

<svg class="a" id="bi7" style="left:339px;top:766px;" width="15" height="15" viewBox="0 0 15 15">
  <defs><linearGradient id="gwx" x1="0" y1="0" x2="1" y2="1"><stop offset="0" stop-color="#fff"/><stop offset="0.45" stop-color="#f4f9ff"/><stop offset="1" stop-color="#8cc0fa"/></linearGradient></defs>
  <rect x="0.7" y="4.4" width="11" height="9.6" rx="1" fill="url(#gwx)" stroke="#0848c8" stroke-width="1.3"/>
  <rect x="0.7" y="4" width="11" height="1.4" fill="#0848c8"/>
  <path d="M7.4 1.3 L13.4 7.3 M13.4 1.3 L7.4 7.3" stroke="#e83000" stroke-width="1.7"/>
</svg>
<svg class="a" style="left:369px;top:773px;" width="9" height="6" viewBox="0 0 9 6"><path d="M0.7 1 H8.3 L4.5 5.2 Z" fill="#000"/></svg>

<!-- TOTAL -->
<svg class="a" id="bi8" style="left:516px;top:759px;" width="20" height="16" viewBox="0 0 20 16">
  <g fill="none" stroke="#fff" stroke-width="1.1" stroke-dasharray="2 1.2"><path d="M5 2 H14 M3 5 H10 M1 8 H8 M4 11 H10 M12 4 Q16 2 18 5 M9 13 H16"/></g>
</svg>
<div class="t" style="left:548px;top:758.5px;font-size:14.5px;color:#000080;transform:scaleX(0.9694);transform-origin:0 0;">TOTAL</div>
<div class="t" style="left:537px;top:776px;font-size:14px;color:#000080;transform:scaleX(0.8829);transform-origin:0 0;">10,440.00</div>
<svg class="a" id="bi9" style="left:598px;top:760px;" width="17" height="17" viewBox="0 0 17 17">
  <path d="M0.5 1.5 L6 6 M3.5 0.5 L5 5.5 M0.5 5 L5.5 6 M7.5 1.5 L5.5 5.5 M1.5 8 L5 6" stroke="#e8e000" stroke-width="1.1"/>
  <path d="M5 4.5 H11.5 L15 7.5 V15.5 H5 Z" fill="#fff" stroke="#000" stroke-width="1.2"/>
  <path d="M11.3 4.6 V7.6 H15" fill="none" stroke="#000" stroke-width="1"/>
  <path d="M7 8.5 H11 M7 10.5 H13 M7 12.5 H13 M7 14 H13" stroke="#000" stroke-width="1"/>
</svg>
<div class="t" style="left:595.5px;top:782.5px;font-size:8px;font-weight:bold;color:#000;transform:scaleX(0.9628);transform-origin:0 0;">Trasp.</div>

<svg class="a" id="bi10" style="left:695px;top:757px;" width="26" height="21" viewBox="0 0 26 21">
  <rect x="1.5" y="0.5" width="9" height="8.5" fill="#fff" stroke="#000"/>
  <path d="M3 2.5 H9 M3 4.5 H9 M3 6.5 H9" stroke="#606060" stroke-width="1"/>
  <rect x="0.5" y="9" width="11" height="1.4" fill="#0000c0"/><path d="M1 11.2 H11" stroke="#000" stroke-width="0.9" stroke-dasharray="1 1"/>
  <path d="M12.5 2.5 L17.5 7.5" stroke="#008000" stroke-width="2"/><path d="M19 9 V3.5 L13.5 9 Z" fill="#008000"/>
  <rect x="14.5" y="9.5" width="9.5" height="8.5" fill="#fff" stroke="#000"/>
  <path d="M16 11.5 H22.5 M16 13.5 H22.5 M16 15.5 H20" stroke="#e0c800" stroke-width="1"/>
  <rect x="13.5" y="17.6" width="11.5" height="1.6" fill="#e8d800"/><path d="M13.5 19.5 H25" stroke="#000" stroke-width="0.8"/>
</svg>
<div class="t" style="left:659px;top:782px;font-size:12px;color:#000;transform:scaleX(0.8895);transform-origin:0 0;">Opciones especiales</div>

<!-- IC2000 -->
<svg class="a" id="bi11" style="left:801px;top:761px;" width="33" height="33" viewBox="0 0 33 33">
  <defs><pattern id="chk" width="2" height="2" patternUnits="userSpaceOnUse"><rect width="2" height="2" fill="#e0a4a4"/><rect width="1" height="1" fill="#980808"/><rect x="1" y="1" width="1" height="1" fill="#980808"/></pattern></defs>
  <rect width="33" height="33" fill="url(#chk)"/>
  <path d="M0 0 H13 L0 11 Z" fill="#980808"/>
  <text x="1.5" y="16.5" font-family="Liberation Serif" font-weight="bold" font-size="10.5" fill="#000" stroke="#000" stroke-width="0.4" textLength="30" lengthAdjust="spacingAndGlyphs">IC2000</text>
  <path d="M21 26.3 H31.5 M26.5 20 V32.3" stroke="#000" stroke-width="3"/>
</svg>

<!-- status bar bits -->
<div class="a" style="left:193px;top:799px;width:3px;height:5px;background:#f0f0f0;"></div>
<div class="a" style="left:443px;top:799px;width:3px;height:5px;background:#f0f0f0;"></div>
<div class="vl" style="left:193px;top:800px;height:4px;background:#fff;"></div>
<div class="vl" style="left:196px;top:800px;height:4px;background:#a0a0a0;"></div>
<div class="vl" style="left:443px;top:800px;height:4px;background:#fff;"></div>
<div class="vl" style="left:446px;top:800px;height:4px;background:#a0a0a0;"></div>
<div class="vl" style="left:0px;top:800px;height:4px;background:#a0a0a0;"></div>

</body>
</html>
